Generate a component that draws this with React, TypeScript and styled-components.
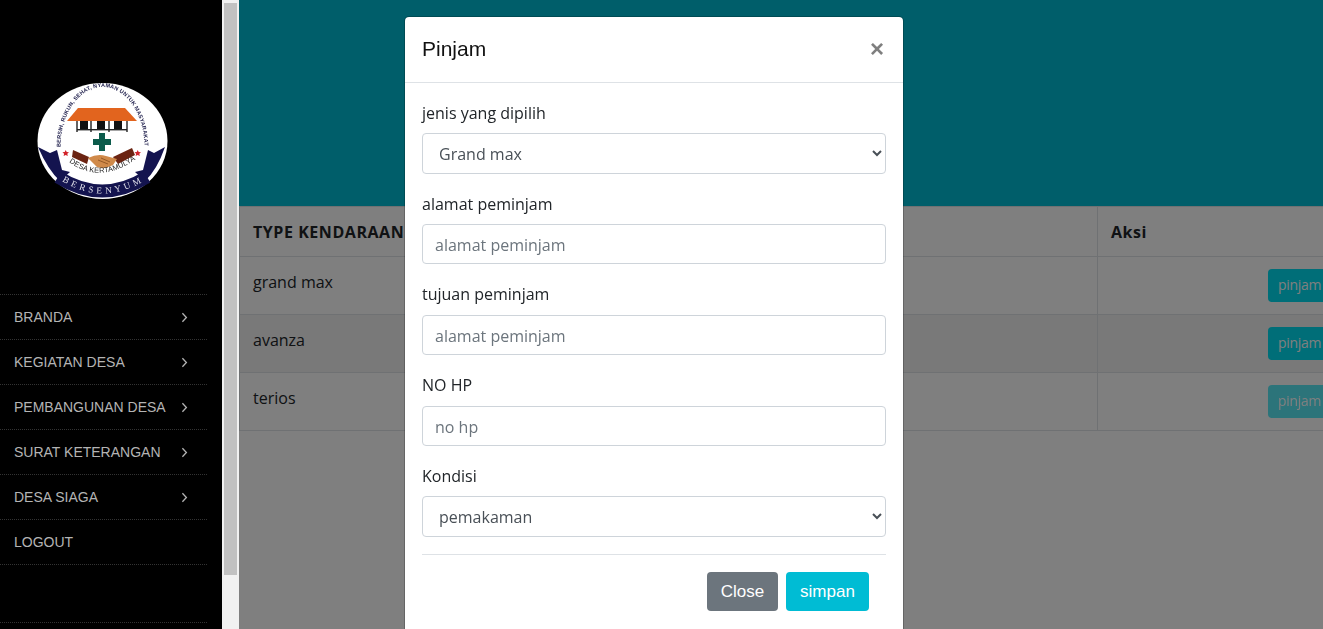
import React from "react";
import styled, { createGlobalStyle } from "styled-components";

const Global = createGlobalStyle`
  html, body { margin: 0; padding: 0; height: 100%; overflow: hidden; background: #fff; }
  * { box-sizing: border-box; }
`;

const Page = styled.div`
  display: flex;
  height: 629px;
  width: 1323px;
  overflow: hidden;
  font-family: "Open Sans", "Noto Sans", sans-serif;
`;

const Sidebar = styled.aside`
  width: 222px;
  flex: none;
  background: #000;
  display: flex;
  flex-direction: column;
`;

const LogoBox = styled.div`
  height: 294px;
  padding: 78px 0 0 33px;
  svg { display: block; filter: blur(0.35px); }
`;

const Nav = styled.nav`
  width: 207px;
  border-top: 1px dotted #333;
`;

const NavRow = styled.a`
  display: flex;
  align-items: center;
  justify-content: space-between;
  height: 45px;
  padding: 0 19px 0 14px;
  border-bottom: 1px dotted #333;
  font: 14px "Liberation Sans", Arial, sans-serif;
  color: #b4b4b4;
`;

const SideFoot = styled.div`
  width: 207px;
  margin-top: 57px;
  border-top: 1px dotted #333;
`;

const Track = styled.div`
  width: 17px;
  flex: none;
  background: #f1f1f1;
  padding: 3px 2px 0 2px;
`;

const Thumb = styled.div`
  height: 572px;
  background: #c1c1c1;
`;

const Main = styled.main`
  position: relative;
  flex: 1;
  min-width: 0;
  overflow: hidden;
  background: #fff;
`;

const Hero = styled.div`
  height: 206px;
  background: #00bcd4;
`;

const Table = styled.table`
  width: 1158px;
  table-layout: fixed;
  border-collapse: collapse;
  color: #212529;
  font-size: 16px;
  line-height: 24px;
`;

const Th = styled.th<{ $w: number }>`
  width: ${(p) => p.$w}px;
  height: 50px;
  padding: 12px 13px;
  text-align: left;
  font-weight: 700;
  letter-spacing: 0.55px;
  border: 1px solid #dee2e6;
  white-space: nowrap;
`;

const Row = styled.tr<{ $striped?: boolean }>`
  background: ${(p) => (p.$striped ? "#f2f2f2" : "#fff")};
`;

const Td = styled.td`
  height: 58px;
  padding: 13px 13px 11px;
  vertical-align: top;
  border: 1px solid #dee2e6;
`;

const PinjamButton = styled.button<{ $off?: boolean }>`
  display: block;
  margin: -1px 0 0 157px;
  height: 33px;
  width: 70px;
  padding: 0 10px 3px;
  border: 0;
  border-radius: 4px;
  text-align: left;
  font: 14px "Open Sans", sans-serif;
  letter-spacing: -0.3px;
  color: #fff;
  background: #00dcf0;
  opacity: ${(p) => (p.$off ? 0.65 : 1)};
`;

const Backdrop = styled.div`
  position: absolute;
  inset: 0;
  background: rgba(0, 0, 0, 0.5);
`;

const Modal = styled.div`
  position: fixed;
  left: 404px;
  top: 16px;
  width: 500px;
  height: 640px;
  background: #fff;
  border-radius: 5px;
  border: 1px solid rgba(0, 0, 0, 0.2);
  border-bottom: 0;
  background-clip: padding-box;
`;

const ModalHeader = styled.header`
  display: flex;
  align-items: center;
  justify-content: space-between;
  height: 66px;
  padding: 0 19px 2px 17px;
  border-bottom: 1px solid #dee2e6;
`;

const Title = styled.h5`
  margin: 0;
  font: 400 21px "Liberation Sans", Arial, sans-serif;
  color: #111;
`;

const CloseX = styled.button`
  border: 0;
  background: none;
  padding: 0;
  font: 700 24px/24px "Liberation Sans", Arial, sans-serif;
  color: #7f7f7f;
`;

const ModalBody = styled.div`
  padding: 18px 17px 0;
`;

const Field = styled.div`
  margin-bottom: 18px;
`;

const Label = styled.label<{ $drop?: boolean }>`
  display: block;
  height: 24px;
  margin-bottom: ${(p) => (p.$drop ? 9 : 8)}px;
  font-size: 16px;
  line-height: 24px;
  color: #212529;
`;

const control = `
  display: block;
  width: 100%;
  height: 40px;
  border: 1px solid #ced4da;
  border-radius: 4px;
  background: #fff;
  font: 16px "Open Sans", sans-serif;
  color: #495057;
`;

const Input = styled.input`
  ${control}
  padding: 7px 12px 5px;
  &::placeholder { color: #6c757d; opacity: 1; }
`;

const Select = styled.select`
  ${control}
  height: 41px;
  padding: 6px 12px;
`;

const Divider = styled.hr`
  margin: -1px 0 0;
  border: 0;
  border-top: 1px solid #dee2e6;
`;

const Footer = styled.footer`
  display: flex;
  justify-content: flex-end;
  gap: 8px;
  padding: 17px 17px 0 0;
`;

const FootButton = styled.button<{ $tone: string; $w: number }>`
  height: 39px;
  width: ${(p) => p.$w}px;
  border: 0;
  border-radius: 4px;
  background: ${(p) => p.$tone};
  color: #fff;
  font: 17px "Liberation Sans", Arial, sans-serif;
`;

const Chevron = () => (
  <svg width="7" height="11" viewBox="0 0 7 11" fill="none" stroke="#b4b4b4" strokeWidth="1.3">
    <path d="M1.4 1.2 L5.4 5.5 L1.4 9.8" />
  </svg>
);

const Logo = () => (
  <svg width="140" height="125" viewBox="33 78 140 125">
    <defs>
      <path id="topArc" d="M 60.5 147 A 42 60 0 1 1 144.5 147" />
      <path id="midArc" d="M 69 162 Q 100 185 136 159" />
      <path id="lowArc" d="M 62 181 Q 102 206 144 181" />
    </defs>
    <ellipse cx="102.5" cy="141" rx="65" ry="58" fill="#fff" />
    <text fontFamily="Liberation Sans" fontWeight="700" fontSize="5.5" fill="#23234f">
      <textPath href="#topArc" textLength="160" lengthAdjust="spacing">BERSIH, RUKUN, SEHAT, NYAMAN UNTUK MASYARAKAT</textPath>
    </text>
    <polygon points="78,108 125,108 137,121 67,121" fill="#e2641e" />
    <rect x="80" y="121" width="8" height="8" fill="#111" />
    <rect x="97" y="121" width="8" height="8" fill="#111" />
    <rect x="114" y="121" width="8" height="8" fill="#111" />
    <path d="M77 121v11M91 121v11M109 121v11M127 121v11" stroke="#222" strokeWidth="1.4" />
    <rect x="77" y="129" width="50" height="1.4" fill="#222" />
    <path d="M99 133h6v6h6v6h-6v6h-6v-6h-6v-6h6z" fill="#0b5b4b" />
    <path d="M65.7 150l1 2.1 2.3.2-1.7 1.5.5 2.3-2.1-1.2-2.1 1.2.5-2.3-1.7-1.5 2.3-.2z" fill="#d2232a" />
    <path d="M137.7 150l1 2.1 2.3.2-1.7 1.5.5 2.3-2.1-1.2-2.1 1.2.5-2.3-1.7-1.5 2.3-.2z" fill="#d2232a" />
    <path d="M73 150 L89 157 L87 164 L72 157 Z" fill="#6b2412" />
    <path d="M132 148 L113 157 L118 164 L135 155 Z" fill="#6b2412" />
    <path d="M88 158 Q98 153 106 156 L117 159 L113 165 Q104 170 97 167 Z" fill="#d08a4a" />
    <path d="M98 160 L108 164 M101 158 L110 162" stroke="#7a4416" strokeWidth="0.7" />
    <text fontFamily="Liberation Sans" fontSize="7.4" fill="#1a1a1a">
      <textPath href="#midArc" textLength="72" lengthAdjust="spacing">DESA KERTAMULYA</textPath>
    </text>
    <path d="M38 147 L50 153 L57 150 L62 170 L70 172 L60 181 Q48 170 38 147 Z" fill="#14144f" />
    <path d="M165 147 L154 153 L148 150 L143 170 L135 172 L145 181 Q157 170 165 147 Z" fill="#14144f" />
    <path d="M58 177 Q102 205 147 177" stroke="#14144f" strokeWidth="13" fill="none" />
    <text fontFamily="Liberation Serif" fontSize="9" fill="#e8e8f0">
      <textPath href="#lowArc" textLength="84" lengthAdjust="spacing">BERSENYUM</textPath>
    </text>
  </svg>
);

const menu = ["BRANDA", "KEGIATAN DESA", "PEMBANGUNAN DESA", "SURAT KETERANGAN", "DESA SIAGA"];

export default function App() {
  return (
    <Page>
      <Global />
      <Sidebar>
        <LogoBox>
          <Logo />
        </LogoBox>
        <Nav>
          {menu.map((m) => (
            <NavRow key={m}>
              {m}
              <Chevron />
            </NavRow>
          ))}
          <NavRow>LOGOUT</NavRow>
        </Nav>
        <SideFoot />
      </Sidebar>
      <Track>
        <Thumb />
      </Track>
      <Main>
        <Hero />
        <Table>
          <thead>
            <tr>
              <Th $w={858}>TYPE KENDARAAN</Th>
              <Th $w={300}>Aksi</Th>
            </tr>
          </thead>
          <tbody>
            <Row>
              <Td>grand max</Td>
              <Td><PinjamButton>pinjam</PinjamButton></Td>
            </Row>
            <Row $striped>
              <Td>avanza</Td>
              <Td><PinjamButton>pinjam</PinjamButton></Td>
            </Row>
            <Row>
              <Td>terios</Td>
              <Td><PinjamButton $off>pinjam</PinjamButton></Td>
            </Row>
          </tbody>
        </Table>
        <Backdrop />
      </Main>
      <Modal>
        <ModalHeader>
          <Title>Pinjam</Title>
          <CloseX>×</CloseX>
        </ModalHeader>
        <ModalBody>
          <Field>
            <Label>jenis yang dipilih</Label>
            <Select defaultValue="Grand max">
              <option>Grand max</option>
            </Select>
          </Field>
          <Field>
            <Label>alamat peminjam</Label>
            <Input placeholder="alamat peminjam" />
          </Field>
          <Field>
            <Label $drop>tujuan peminjam</Label>
            <Input placeholder="alamat peminjam" />
          </Field>
          <Field>
            <Label $drop>NO HP</Label>
            <Input placeholder="no hp" />
          </Field>
          <Field>
            <Label>Kondisi</Label>
            <Select defaultValue="pemakaman">
              <option>pemakaman</option>
            </Select>
          </Field>
          <Divider />
          <Footer>
            <FootButton $tone="#6c757d" $w={71}>Close</FootButton>
            <FootButton $tone="#00bcd4" $w={83}>simpan</FootButton>
          </Footer>
        </ModalBody>
      </Modal>
    </Page>
  );
}
